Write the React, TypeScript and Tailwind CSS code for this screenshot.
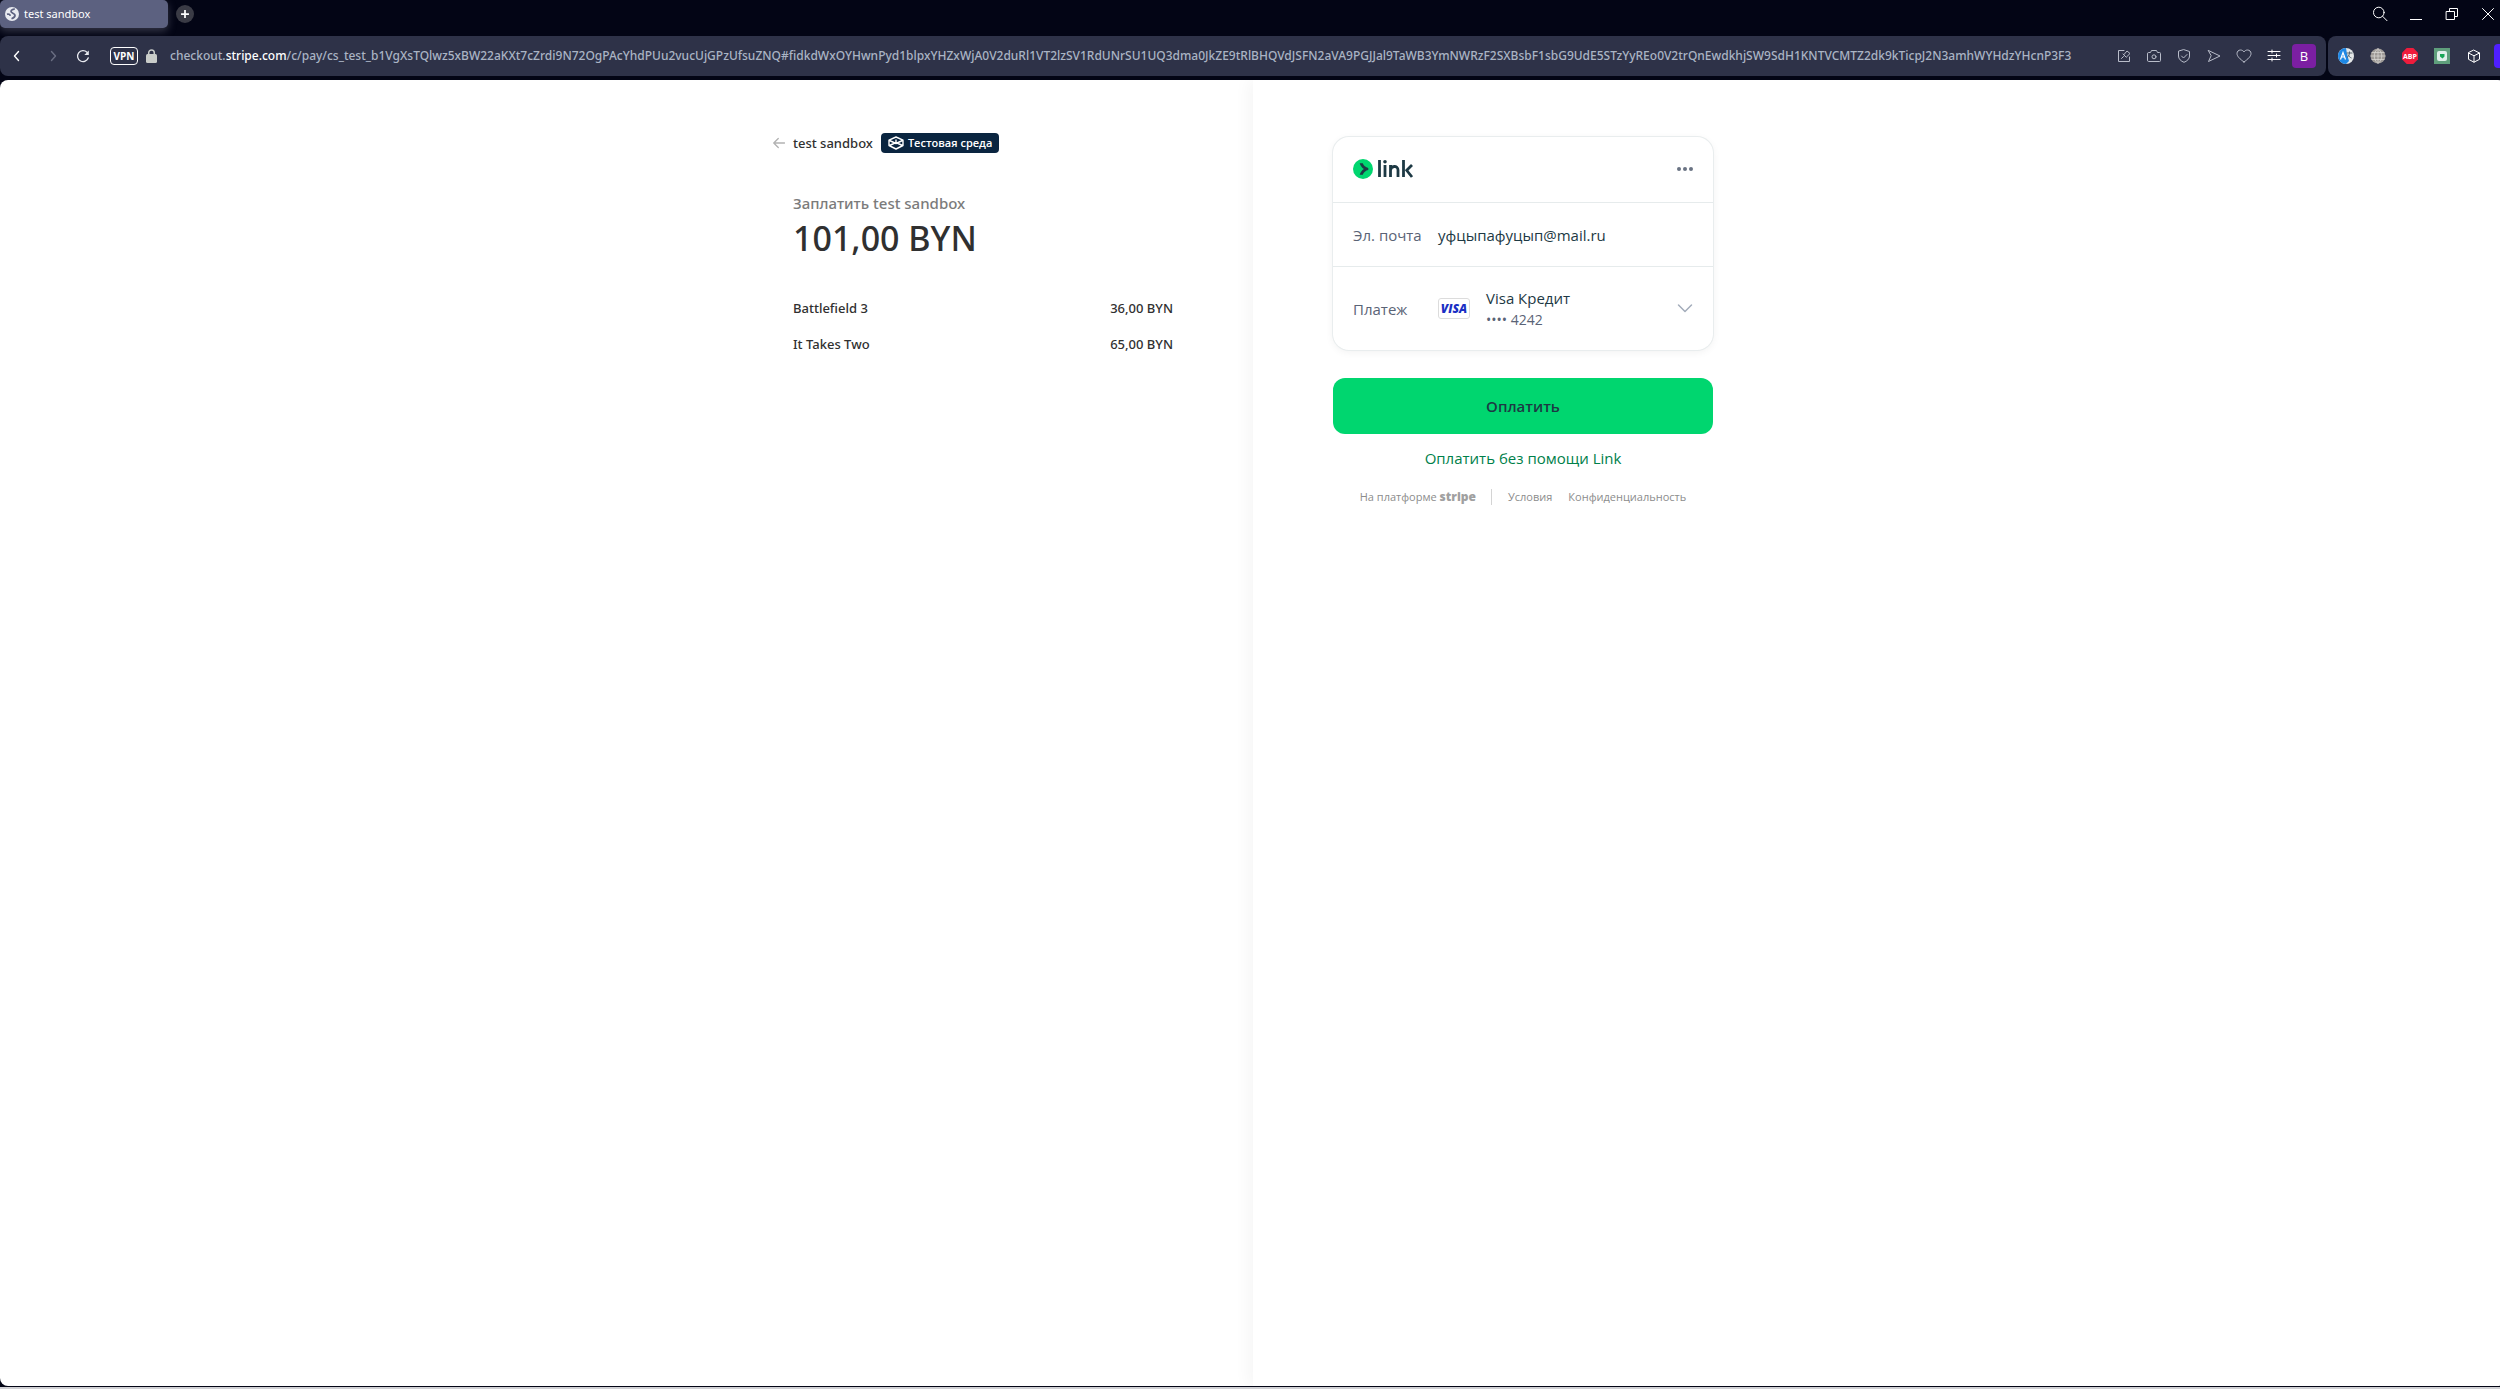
import React from "react";

const HOST_PATH =
  "/c/pay/cs_test_b1VgXsTQlwz5xBW22aKXt7cZrdi9N72OgPAcYhdPUu2vucUjGPzUfsuZNQ#fidkdWxOYHwnPyd1blpxYHZxWjA0V2duRl1VT2lzSV1RdUNrSU1UQ3dma0JkZE9tRlBHQVdJSFN2aVA9PGJJal9TaWB3YmNWRzF2SXBsbF1sbG9UdE5STzYyREo0V2trQnEwdkhjSW9SdH1KNTVCMTZ2dk9kTicpJ2N3amhWYHdzYHcnP3F3";

type IconProps = { children: React.ReactNode; className?: string; width?: number; size?: number };

function Icon({ children, className = "", width = 1, size = 16 }: IconProps) {
  return (
    <svg
      width={size}
      height={size}
      viewBox="0 0 16 16"
      fill="none"
      stroke="currentColor"
      strokeWidth={width}
      strokeLinecap="round"
      strokeLinejoin="round"
      className={"shrink-0 " + className}
      aria-hidden="true"
    >
      {children}
    </svg>
  );
}

function IconButton({ label, children, className = "w-[30px]" }: { label: string; children: React.ReactNode; className?: string }) {
  return (
    <button type="button" aria-label={label} className={"flex h-6 shrink-0 items-center justify-center " + className}>
      {children}
    </button>
  );
}

function TitleBar() {
  return (
    <header className="-mr-1.5 flex h-9 items-start bg-[#030515] text-white">
      <div className="flex h-7 w-[168px] items-center gap-[5px] rounded-[5px] bg-[#5c6180] pl-[5px] shadow-[0_3px_8px_rgba(150,150,170,0.35)]">
        <svg width="14" height="14" viewBox="0 0 14 14" aria-hidden="true" className="shrink-0">
          <circle cx="7" cy="7" r="7" fill="#e8eaf0" />
          <path
            d="M9.8 2.2C8 2 6 3 6 4.500S9.800 6.300 10 8 8.500 11 6.500 11.800M2 7.200c1.500-.4 3 .2 3.200 1.600"
            fill="none"
            stroke="#5c6180"
            strokeWidth="1.700"
          />
        </svg>
        <span className="font-['Noto_Sans',sans-serif] text-[11px] leading-4">test sandbox</span>
      </div>
      <button type="button" aria-label="Новая вкладка" className="ml-2 mt-[5px] flex size-[18px] items-center justify-center rounded-full bg-[#3a3b45]">
        <Icon width={2} size={14}>
          <path d="M8 3.500v9M3.500 8h9" strokeLinecap="butt" />
        </Icon>
      </button>
      <div className="ml-auto flex h-7 items-center">
        <IconButton label="Поиск" className="w-9">
          <Icon>
            <circle cx="6.800" cy="6.500" r="5.300" />
            <path d="m10.700 10.400 4.300 4.300" />
          </Icon>
        </IconButton>
        <IconButton label="Свернуть" className="w-9">
          <Icon>
            <path d="M2 13.500h12" strokeLinecap="butt" />
          </Icon>
        </IconButton>
        <IconButton label="Восстановить" className="w-9">
          <Icon>
            <path d="M2.500 5.500h8v8h-8zM5.500 5.500v-3h8v8h-3" strokeLinejoin="miter" />
          </Icon>
        </IconButton>
        <IconButton label="Закрыть" className="w-9">
          <Icon>
            <path d="m2.500 2.500 11 11M13.500 2.500l-11 11" />
          </Icon>
        </IconButton>
      </div>
    </header>
  );
}

function Toolbar() {
  return (
    <nav className="flex h-11 gap-0.5 bg-[#030515] pb-1 text-[#b9bdca]">
      <div className="flex min-w-0 flex-1 items-center rounded-lg bg-[#2e3248] pr-2.5">
        <IconButton label="Назад" className="w-[34px] text-white">
          <Icon width={1.4}>
            <path d="M9.500 3.500 5.500 8l4 4.500" />
          </Icon>
        </IconButton>
        <IconButton label="Вперёд" className="ml-1 w-[30px] text-[#6a6e82]">
          <Icon width={1.4}>
            <path d="m6.500 3.500 4 4.500-4 4.500" />
          </Icon>
        </IconButton>
        <IconButton label="Обновить" className="w-[30px] text-[#e8eaf0]">
          <Icon width={1.3}>
            <path d="M13.300 9.800A5.500 5.500 0 1 1 12 4.300" />
            <path d="M13.800 2.500v4.500H9.300z" fill="currentColor" stroke="none" />
          </Icon>
        </IconButton>
        <button type="button" className="ml-3 flex h-[18px] w-7 shrink-0 items-center justify-center rounded-[4px] border border-white text-[10px] font-bold leading-3 text-white">
          VPN
        </button>
        <svg width="11" height="14" viewBox="0 0 11 14" className="ml-2 shrink-0" aria-hidden="true">
          <path d="M2.700 6V3.800a2.800 2.800 0 0 1 5.600 0V6" fill="none" stroke="#c9ccc9" strokeWidth="1.500" />
          <rect x="0" y="5" width="11" height="9" rx="1.500" fill="#c9ccc9" />
        </svg>
        <div className="ml-[13px] min-w-0 flex-1 overflow-hidden whitespace-nowrap font-['Noto_Sans',sans-serif] text-[12px] font-medium leading-4 text-[#aab4c4]">
          checkout.<span className="text-white">stripe.com</span>
          {HOST_PATH}
        </div>
        <div className="ml-3 flex items-center">
          <IconButton label="Изменить">
            <Icon>
              <path d="M8 2.500H2.500v11h11V9" />
              <path d="m5.500 10.500 2-2M7 6l3 3M8 6.500l3-3.500 3 2.500-3.500 3.500" />
            </Icon>
          </IconButton>
          <IconButton label="Снимок">
            <Icon>
              <path d="M1.500 5.500q0-1 1-1h2l1-2h5l1 2h2q1 0 1 1v7q0 1-1 1h-11q-1 0-1-1z" />
              <circle cx="8" cy="8.800" r="2" />
            </Icon>
          </IconButton>
          <IconButton label="Защита">
            <Icon>
              <path d="M8 1.700 13.500 3.500V8c0 3-2.500 5.200-5.500 6.300C5 13.200 2.500 11 2.500 8V3.500z" />
              <path d="m5.500 8 2 2 3.500-3.500" />
            </Icon>
          </IconButton>
          <IconButton label="Отправить">
            <Icon>
              <path d="M2.500 2.500 14 8 2.500 13.500 5 8z" />
            </Icon>
          </IconButton>
          <IconButton label="Избранное">
            <Icon>
              <path d="M8 14C4 11 1 8.500 1 5.500 1 3.500 2.500 2 4.500 2 6 2 7.300 2.800 8 4c.7-1.200 2-2 3.500-2C13.500 2 15 3.500 15 5.500 15 8.500 12 11 8 14z" />
            </Icon>
          </IconButton>
          <IconButton label="Настройки" className="w-[30px] text-white">
            <Icon>
              <path d="M2 3.500h12M2 7.500h12M2 11.500h12M6 2v3M10.500 6v3M6 10v3" />
            </Icon>
          </IconButton>
          <button type="button" aria-label="Профиль" className="ml-[3px] flex size-6 items-center justify-center rounded bg-[#7b1fa2] text-[13px] leading-4 text-white">
            B
          </button>
        </div>
      </div>
      <div className="-mr-1.5 flex shrink-0 items-center rounded-l-lg bg-[#2e3248] pl-0.5">
        <IconButton label="Переводчик" className="w-8">
          <svg width="16" height="16" viewBox="0 0 16 16" aria-hidden="true">
            <circle cx="8" cy="8" r="8" fill="#e4e7e8" />
            <path d="M8 0a8 8 0 0 0 0 16l3-3L9 6z" fill="#1e88e5" />
            <path d="m2.500 11.500 2.500-7 2.500 7M3.500 9h3" stroke="#fff" fill="none" strokeWidth="1.200" />
            <path d="M8.500 5h6M11.500 3.500V5c0 2-1 3.500-2.500 4.500M10 6.500c.5 1.500 2 3 3.500 3.500" stroke="#56646d" fill="none" />
          </svg>
        </IconButton>
        <IconButton label="Сеть" className="w-8">
          <svg width="16" height="16" viewBox="0 0 16 16" aria-hidden="true">
            <circle cx="8" cy="8" r="7.500" fill="#9d9996" />
            <path d="M8 .5v15M.5 8h15M1.500 4.500h13M1.500 11.500h13M8 .5c-5 4-5 11 0 15M8 .5c5 4 5 11 0 15" stroke="#dddbd9" strokeWidth=".7" fill="none" />
          </svg>
        </IconButton>
        <IconButton label="Adblock Plus" className="w-8">
          <svg width="16" height="16" viewBox="0 0 16 16" aria-hidden="true">
            <path d="M4.700 0h6.600L16 4.700v6.600L11.300 16H4.700L0 11.300V4.700z" fill="#ee1c3c" />
            <text x="8" y="10.500" textAnchor="middle" fontSize="7" fontWeight="700" fill="#fff">
              ABP
            </text>
          </svg>
        </IconButton>
        <IconButton label="Расширение" className="w-8">
          <svg width="16" height="16" viewBox="0 0 16 16" aria-hidden="true">
            <rect width="16" height="16" fill="#5f9f7c" />
            <rect x="3" y="3" width="10" height="10" rx="2" fill="#dff0ea" />
            <path d="M6 6h4.500v2.500L8.500 10.500 6 8.500z" fill="#19a757" />
          </svg>
        </IconButton>
        <IconButton label="Расширения" className="w-8 text-white">
          <Icon>
            <path d="M8 2.200 13.500 5v6.300L8 14.200 2.500 11.300V5zM2.500 5 8 7.800 13.500 5M8 7.800v6.400" />
          </Icon>
        </IconButton>
        <button type="button" aria-label="Боковая панель" className="ml-1 h-6 w-3 rounded bg-[#4f1fff]" />
      </div>
    </nav>
  );
}

function OrderSummary() {
  const items = [
    { name: "Battlefield 3", price: "36,00 BYN" },
    { name: "It Takes Two", price: "65,00 BYN" },
  ];
  return (
    <section className="flex justify-end pr-20 pt-[52px] font-['Noto_Sans',sans-serif]">
      <div className="w-[380px] text-[#303030]">
        <div className="-ml-5 flex h-[22px] items-center">
          <a href="#back" className="flex items-center gap-2 text-[13px] font-medium leading-5">
            <Icon size={12} width={1.800} className="text-[#b3b3b3]">
              <path d="M15.500 8H1M7 2 1 8l6 6" />
            </Icon>
            test sandbox
          </a>
          <span className="ml-2 flex h-5 items-center gap-1 rounded bg-[#0a2540] px-[7px] font-['Open_Sans',sans-serif] text-[11px] font-semibold leading-4 text-white">
            <svg width="16" height="14" viewBox="0 0 16 14" fill="none" stroke="currentColor" strokeWidth="1.400" strokeLinejoin="round" aria-hidden="true">
              <path d="M8 1 15 4.200v5.300L8 13 1 9.500V4.200zM1.500 4.500 8 7.500l6.500-3M1.500 9.500 8 6.500l6.500 3M8 3.500v3" />
            </svg>
            Тестовая среда
          </span>
        </div>
        <h1 className="mt-[37px] text-[15px] font-medium leading-6 text-[#7b7b7b]">Заплатить test sandbox</h1>
        <p className="text-[34px] font-medium leading-[46px]">101,00 BYN</p>
        <ul className="mt-[37px] flex flex-col gap-4 text-[13px] font-medium leading-5">
          {items.map((item) => (
            <li key={item.name} className="flex justify-between">
              <span>{item.name}</span>
              <span>{item.price}</span>
            </li>
          ))}
        </ul>
      </div>
    </section>
  );
}

function PaymentPanel() {
  return (
    <section className="pl-20 pt-[57px] shadow-[-5px_0_15px_rgba(0,0,0,0.04)]">
      <div className="w-[380px]">
        <div className="rounded-2xl text-[15px] leading-5 text-[#1d3944] shadow-[0_0_0_1px_#e9edee,0_2px_8px_rgba(0,0,0,0.06)]">
          <div className="flex h-[65px] items-center justify-between px-5 pb-0.5">
            <div className="flex items-center gap-[5px]" role="img" aria-label="link">
              <svg width="20" height="20" viewBox="0 0 20 20" aria-hidden="true">
                <circle cx="10" cy="10" r="10" fill="#00d66f" />
                <path d="M9.800 4.200H6.700c.7 2.400 2.200 4.500 4.200 5.800-2 1.300-3.500 3.400-4.200 5.800h3.100c.8-2.300 2.900-4.300 5.500-4.700V8.900c-2.600-.4-4.700-2.400-5.500-4.700z" fill="#1d3944" />
              </svg>
              <svg width="36" height="18" viewBox="0 0 36 18" fill="none" stroke="#1d3944" strokeWidth="2.800" aria-hidden="true">
                <path d="M1.500 0v17M7 5v12M12.500 17V5M12.500 10.500c0-5 7.500-5.500 7.500-.5V17M25.500 0v17M34 5l-6 6M28 9.500l6 7.500" />
                <circle cx="7" cy="1.800" r="1.800" fill="#1d3944" stroke="none" />
              </svg>
            </div>
            <button type="button" aria-label="Ещё">
              <svg width="16" height="4" viewBox="0 0 16 4" fill="#6a7383" aria-hidden="true">
                <circle cx="2" cy="2" r="2" />
                <circle cx="8" cy="2" r="2" />
                <circle cx="14" cy="2" r="2" />
              </svg>
            </button>
          </div>
          <div className="flex h-16 items-center border-t border-[#e6ebec] px-5">
            <span className="w-[85px] text-[#5a6376]">Эл. почта</span>
            <span>уфцыпафуцып@mail.ru</span>
          </div>
          <button type="button" className="flex h-[84px] w-full items-center border-t border-[#e6ebec] px-5 text-left">
            <span className="w-[85px] text-[#5a6376]">Платеж</span>
            <svg width="32" height="21" viewBox="0 0 32 21" role="img" aria-label="Visa">
              <rect x=".5" y=".5" width="31" height="20" rx="2.500" fill="#fff" stroke="#dcdcdc" />
              <text x="16" y="15" textAnchor="middle" fontSize="12" fontWeight="800" fontStyle="italic" fill="#1a2fc4">
                VISA
              </text>
            </svg>
            <span className="ml-4 flex flex-1 flex-col pt-0.5">
              <span>Visa Кредит</span>
              <span className="text-[14px] leading-6 text-[#5a6376]">•••• 4242</span>
            </span>
            <Icon width={1.500} className="text-[#a3acba]">
              <path d="m1.500 4 6.500 6.500L14.500 4" />
            </Icon>
          </button>
        </div>
        <button type="button" className="mt-7 h-14 w-full rounded-xl bg-[#00d66f] text-[15px] font-semibold leading-5 text-[#1d3944]">
          Оплатить
        </button>
        <div className="mt-3 flex justify-center">
          <a href="#card" className="text-[15px] leading-6 text-[#00804a]">
            Оплатить без помощи Link
          </a>
        </div>
        <footer className="mt-[19px] flex items-center justify-center text-[11px] leading-4 text-[#8c8c8c]">
          <a href="#stripe">
            На платформе <b className="text-[12px] font-extrabold text-[#a0a0a0]">stripe</b>
          </a>
          <a href="#terms" className="ml-[15px] border-l border-[#d4d4d4] pl-4">
            Условия
          </a>
          <a href="#privacy" className="ml-4">
            Конфиденциальность
          </a>
        </footer>
      </div>
    </section>
  );
}

export default function App() {
  return (
    <div className="flex min-h-screen flex-col overflow-hidden bg-[#030515] font-['Open_Sans','Noto_Sans',sans-serif]">
      <TitleBar />
      <Toolbar />
      <main className="-mr-1.5 grid flex-1 grid-cols-2 overflow-hidden rounded-lg bg-white">
        <OrderSummary />
        <PaymentPanel />
      </main>
      <div className="mt-px h-0.5 bg-[#d0d0d4]" />
    </div>
  );
}
